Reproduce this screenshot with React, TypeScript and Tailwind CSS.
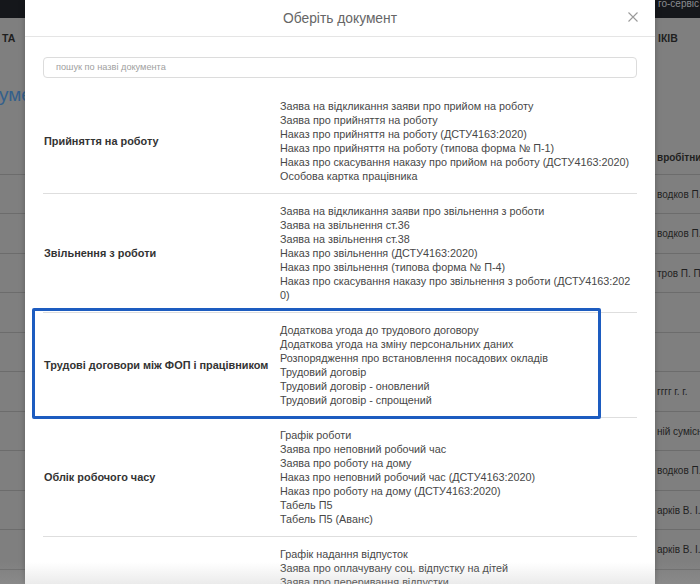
const groups: { title: string; items: string[][] }[] = [
  {
    title: "Прийняття на роботу",
    items: [
      ["Заява на відкликання заяви про прийом на роботу"],
      ["Заява про прийняття на роботу"],
      ["Наказ про прийняття на роботу (ДСТУ4163:2020)"],
      ["Наказ про прийняття на роботу (типова форма № П-1)"],
      ["Наказ про скасування наказу про прийом на роботу (ДСТУ4163:2020)"],
      ["Особова картка працівника"],
    ],
  },
  {
    title: "Звільнення з роботи",
    items: [
      ["Заява на відкликання заяви про звільнення з роботи"],
      ["Заява на звільнення ст.36"],
      ["Заява на звільнення ст.38"],
      ["Наказ про звільнення (ДСТУ4163:2020)"],
      ["Наказ про звільнення (типова форма № П-4)"],
      ["Наказ про скасування наказу про звільнення з роботи (ДСТУ4163:202", "0)"],
    ],
  },
  {
    title: "Трудові договори між ФОП і працівником",
    items: [
      ["Додаткова угода до трудового договору"],
      ["Додаткова угода на зміну персональних даних"],
      ["Розпорядження про встановлення посадових окладів"],
      ["Трудовий договір"],
      ["Трудовий договір - оновлений"],
      ["Трудовий договір - спрощений"],
    ],
  },
  {
    title: "Облік робочого часу",
    items: [
      ["Графік роботи"],
      ["Заява про неповний робочий час"],
      ["Заява про роботу на дому"],
      ["Наказ про неповний робочий час (ДСТУ4163:2020)"],
      ["Наказ про роботу на дому (ДСТУ4163:2020)"],
      ["Табель П5"],
      ["Табель П5 (Аванс)"],
    ],
  },
  {
    title: "Відпустки",
    items: [
      ["Графік надання відпусток"],
      ["Заява про оплачувану соц. відпустку на дітей"],
      ["Заява про переривання відпустки"],
      ["Заява про відпустку"],
      ["Наказ про надання відпустки (ДСТУ4163:2020)"],
      ["Наказ про відкликання з відпустки"],
      ["Наказ про перенесення відпустки"],
    ],
  },
];

const bgRows: { right: string; tall: boolean }[] = [
  { right: "водков П. П.", tall: false },
  { right: "водков П. П.", tall: true },
  { right: "тров П. П.", tall: false },
  { right: "", tall: true },
  { right: "", tall: false },
  { right: "гггг г. г.", tall: true },
  { right: "ній сумісник", tall: false },
  { right: "водков П. П.", tall: true },
  { right: "арків В. І.", tall: false },
  { right: "арків В. І.", tall: true },
  { right: "r Telegram u", tall: false },
];

function BackgroundPage() {
  return (
    <div className="flex flex-col w-full h-full text-[#1f1f1f]">
      <div className="h-[18px] shrink-0 bg-[#15171b] flex justify-end overflow-hidden">
        <span className="w-[45px] pl-[3px] text-[10px] leading-[8px] text-[#8a8c90] whitespace-nowrap">
          го-сервіс
        </span>
      </div>
      <div className="h-[40px] shrink-0 pt-[2px] flex justify-between items-center text-[10.5px] font-semibold">
        <span className="pl-[2px]">ТА</span>
        <span className="w-[45px] pl-[3px] whitespace-nowrap">ІКІВ</span>
      </div>
      <div className="h-[82px] shrink-0 pb-[8px] flex items-center text-[19px] text-[#34608c]">
        <span className="-ml-[1px] whitespace-nowrap">ументи</span>
      </div>
      <div className="h-[35px] shrink-0 flex justify-end items-end pb-[9px] border-b border-[#6c6c6c] text-[10px] font-bold">
        <span className="w-[45px] pl-[2px] whitespace-nowrap overflow-hidden">вробітник</span>
      </div>
      {bgRows.map((r, i) => (
        <div
          key={i}
          className={
            "shrink-0 flex justify-end items-center border-b border-[#6c6c6c] text-[10px] " +
            (r.tall ? "h-[40px]" : "h-[39px]")
          }
        >
          <span className="w-[45px] pl-[2px] whitespace-nowrap overflow-hidden">{r.right}</span>
        </div>
      ))}
    </div>
  );
}

function CloseIcon() {
  return (
    <svg width="10" height="10" viewBox="0 0 10 10" fill="none">
      <path d="M0.5 0.5l9 9M9.5 0.5l-9 9" stroke="#9a9a9a" strokeWidth="1.1" />
    </svg>
  );
}

export default function App() {
  return (
    <div
      className="relative w-[700px] h-[584px] overflow-hidden bg-[#7f7f7f]"
      style={{ fontFamily: '"Liberation Sans", Arial, sans-serif' }}
    >
      <BackgroundPage />

      {/* Modal */}
      <div className="absolute left-[25px] top-0 w-[630px] h-full bg-white shadow-[0_0_6px_rgba(0,0,0,0.25)] flex flex-col">
        <div className="h-[37px] shrink-0 border-b border-[#e5e5e5] relative flex items-center justify-center">
          <span className="text-[13.8px] text-[#666] mt-[2px]">Оберіть документ</span>
          <button className="absolute right-[17px] top-[12px]">
            <CloseIcon />
          </button>
        </div>

        <div className="px-[18px]">
          <div className="mt-[20px] h-[21px] border border-[#dcdcdc] rounded-[4px] flex items-center pl-[12px] text-[9.2px] text-[#a0a0a0]">
            пошук по назві документа
          </div>

          <div className="mt-[11px]">
            {groups.map((g) => (
              <div key={g.title} className="flex border-b border-[#dedede]">
                <div className="w-[237px] shrink-0 flex items-center pl-[1px] text-[10.9px] font-bold text-[#333]">
                  {g.title}
                </div>
                <div className="flex-1 pt-[10px] pb-[10px] text-[10.8px] leading-[14px] text-[#474747] whitespace-nowrap">
                  {g.items.map((lines) =>
                    lines.map((line) => <div key={line}>{line}</div>)
                  )}
                </div>
              </div>
            ))}
          </div>
        </div>
      </div>

      {/* Highlight annotation */}
      <div className="absolute left-[32px] top-[308px] w-[569px] h-[111px] border-[3.5px] border-[#1d5cc0] rounded-[2px]" />

      {/* Bottom fade */}
      <div className="absolute left-0 bottom-0 w-full h-[22px] bg-gradient-to-b from-transparent to-[rgba(171,171,171,0.24)]" />
    </div>
  );
}
